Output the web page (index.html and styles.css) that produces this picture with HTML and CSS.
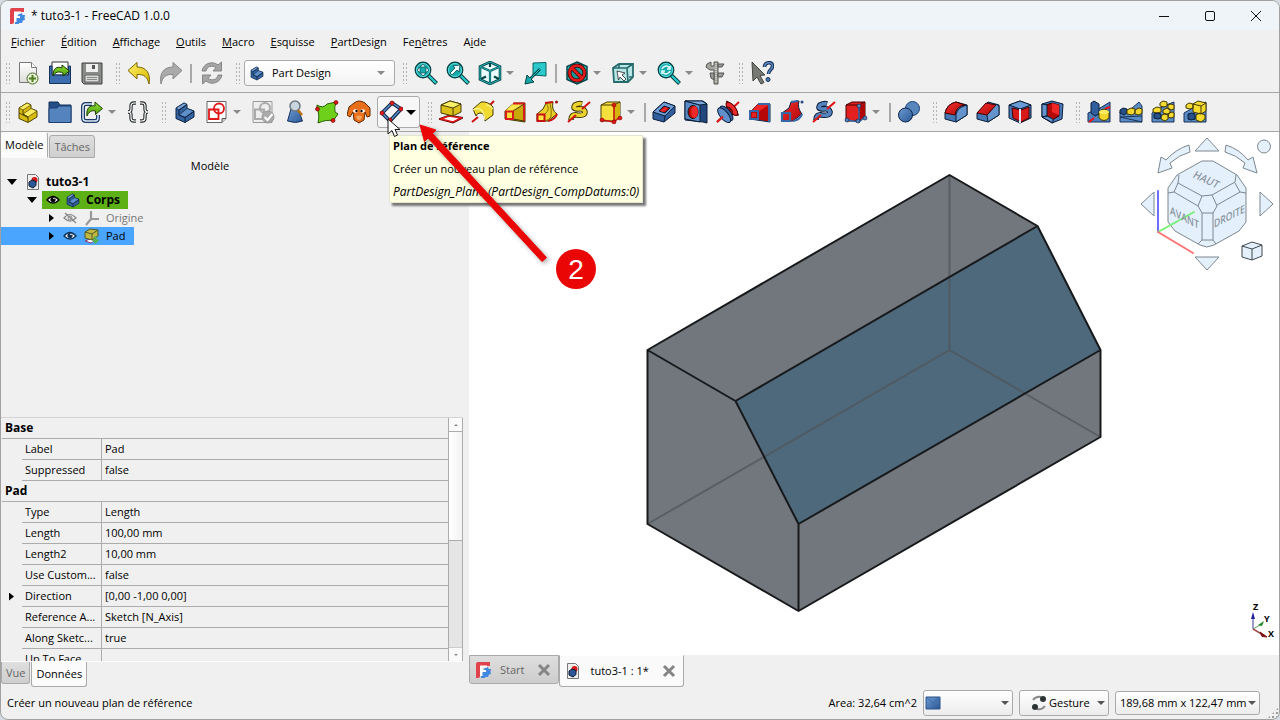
FILE: index.html
```html
<!DOCTYPE html>
<html lang="fr">
<head>
<meta charset="utf-8">
<title>* tuto3-1 - FreeCAD 1.0.0</title>
<link rel="stylesheet" href="styles.css">
</head>
<body>
<svg class="sprite" aria-hidden="true">
  <defs>
    <linearGradient id="gy" x1="0" y1="0" x2="1" y2="1"><stop offset="0" stop-color="#fdf06a"/><stop offset="1" stop-color="#d8b800"/></linearGradient>
    <linearGradient id="gb" x1="0" y1="0" x2="1" y2="1"><stop offset="0" stop-color="#6c9bd0"/><stop offset="1" stop-color="#2c5796"/></linearGradient>
    <linearGradient id="gr" x1="0" y1="0" x2="1" y2="1"><stop offset="0" stop-color="#f53030"/><stop offset="1" stop-color="#b00606"/></linearGradient>
    <linearGradient id="gg" x1="0" y1="0" x2="0" y2="1"><stop offset="0" stop-color="#8ee038"/><stop offset="1" stop-color="#4e9a06"/></linearGradient>
    <linearGradient id="gp" x1="0" y1="0" x2="0" y2="1"><stop offset="0" stop-color="#ffffff"/><stop offset="1" stop-color="#dcdcd8"/></linearGradient>
  </defs>
  <symbol id="logo" viewBox="0 0 16 16"><path d="M1 2q0-2 2-2h12v4H5v10q0 2-2 2H1z" fill="#e0434c"/><path d="M10 6l3-1 .5 2 2.500 0-.5 3 .5 2-2 .5-1 2.500-2.500 0-1 1H6V11z" fill="#4189e0"/><path d="M5 3.500h7v2H7.500v2.500H11v2H7.500V14H5z" fill="#fff"/></symbol>
  <symbol id="docfc" viewBox="0 0 16 16"><path d="M2.500.5h8l3 3v12h-11z" fill="#eee" stroke="#777"/><circle cx="9.500" cy="6" r="3" fill="#d81818"/><path d="M4 8l3-2 4 1.500v4L8 14l-4-2z" fill="#2d5797" stroke="#0c1c34"/></symbol>
  <symbol id="new" viewBox="0 0 24 24"><path d="M3.500 1.500h12l5 5v15h-17z" fill="url(#gp)" stroke="#777"/><path d="M15.500 1.500v5h5" fill="#fff" stroke="#777"/><circle cx="16.500" cy="17.500" r="5.500" fill="#e8f0d8" stroke="#456a25"/><path d="M16.500 14v7M13 17.500h7" stroke="#4e7d1c" stroke-width="2"/></symbol>
  <symbol id="open" viewBox="0 0 24 24"><path d="M4 1h16v13H4z" fill="#fff" stroke="#333"/><path d="M1.500 5v17.500h21V5h-2v9H4V5z" fill="#3c6cae" stroke="#14345e"/><path d="M5 15C5 7 9 5 14 7V4l7.500 6-6.500 5v-3c-4-2-8-1-10 3z" fill="url(#gg)" stroke="#173a02"/></symbol>
  <symbol id="save" viewBox="0 0 24 24"><path d="M2 2h20v21H4l-2-2z" fill="#8a8c8a" stroke="#3f413f"/><path d="M6 3h12v8H6z" fill="#eee"/><path d="M12 4h3v4h-3z" fill="#555"/><path d="M5 14h14v7H5z" fill="#d9dcd8" stroke="#666"/><path d="M7 16.500h10M7 18.500h10" stroke="#888"/></symbol>
  <symbol id="undo" viewBox="0 0 24 24"><path d="M1 9.500L10 1.500V6c9 0 14 6 12 17-1.500-7-5-10-12-9.500V18z" fill="url(#gy)" stroke="#7a6400"/></symbol>
  <symbol id="redo" viewBox="0 0 24 24"><path d="M23 9.500L14 1.500V6C5 6 0 12 2 23c1.500-7 5-10 12-9.500V18z" fill="#aaa" stroke="#888"/></symbol>
  <symbol id="refresh" viewBox="0 0 24 24"><path d="M2 10C3 3 12-1 18 4l3.500-3v9H13l3-3.500C12 4 7 5 6 10zM22 14c-1 7-10 11-16 6l-3.500 3v-9H11l-3 3.500c4 2.500 9 1.500 10-3.500z" fill="#a5a5a5" stroke="#858585"/></symbol>
  <symbol id="part" viewBox="0 0 24 24"><path d="M3 8l8-5 3 1.500v4l7 2.500v6l-9 5.500-9-4z" fill="#34639f" stroke="#0d2340"/><path d="M3 8l8-5 3 1.500L6 10z" fill="#7aa5d8" stroke="#0d2340" stroke-width=".7"/><path d="M6 15l8-6.500L21 11l-9 6.500z" fill="#5f90cb" stroke="#0d2340" stroke-width=".7"/><path d="M6 10v5l6 2.500v5M6 10l8-5.500M12 17.500l9-6" fill="none" stroke="#0d2340"/></symbol>
  <symbol id="party" viewBox="0 0 24 24"><path d="M3 8l8-5 4 2v3.500l6 2.500v6l-9 5.500-9-4z" fill="#d9bb10" stroke="#4e4300"/><path d="M3 8l8-5 4 2L7 10z" fill="#fcec62" stroke="#4e4300" stroke-width=".7"/><path d="M7 14l8-5.500 6 2.500-9 6z" fill="#fcec62" stroke="#4e4300" stroke-width=".7"/><path d="M7 10v4l5 3v5M3 13l9 4.500" fill="none" stroke="#4e4300"/></symbol>
  <symbol id="zoomfit" viewBox="0 0 24 24"><path d="M14 14l8.500 8.500" stroke="#033" stroke-width="4"/><path d="M14 14l8 8" stroke="#25c9cb" stroke-width="2.400"/><circle cx="9" cy="9" r="7.700" fill="#18abad" stroke="#064446" stroke-width="1.400"/><circle cx="9" cy="9" r="6.500" fill="none" stroke="#5fe2e2"/><path d="M9 3l2.500 3h-5zM9 15l2.500-3h-5zM3 9l3-2.500v5zM15 9l-3-2.500v5z" fill="#eff" stroke="#033" stroke-width=".6"/></symbol>
  <symbol id="zoomsel" viewBox="0 0 24 24"><path d="M14 14l8.500 8.500" stroke="#033" stroke-width="4"/><path d="M14 14l8 8" stroke="#25c9cb" stroke-width="2.400"/><circle cx="9" cy="9" r="7.700" fill="#18abad" stroke="#064446" stroke-width="1.400"/><circle cx="9" cy="9" r="6.500" fill="none" stroke="#5fe2e2"/><path d="M4 12l5-5-2-2 7-1-1 7-2-2-5 5z" fill="#eff" stroke="#033" stroke-width=".7"/></symbol>
  <symbol id="zoomref" viewBox="0 0 24 24"><path d="M14 14l8.500 8.500" stroke="#033" stroke-width="4"/><path d="M14 14l8 8" stroke="#25c9cb" stroke-width="2.400"/><circle cx="9" cy="9" r="7.700" fill="#18abad" stroke="#064446" stroke-width="1.400"/><circle cx="9" cy="9" r="6.500" fill="none" stroke="#5fe2e2"/><path d="M5 8c1-3 5-4 7-1.500M13 5v3h-3M13 10c-1 3-5 4-7 1.500M5 13v-3h3" fill="none" stroke="#eff" stroke-width="1.500"/></symbol>
  <symbol id="iso" viewBox="0 0 24 24"><path d="M12 1l10 4.500v13L12 23 2 18.500v-13z" fill="#e9ffff" stroke="#054447" stroke-width="2.600"/><path d="M2 5.500L12 10l10-4.500M12 10v13M2 18.500l6-3M22 18.500l-6-3M12 1v5" fill="none" stroke="#054447" stroke-width="2.200"/><path d="M12 1l10 4.500v13L12 23 2 18.500v-13zM2 5.500L12 10l10-4.500M12 10v13" fill="none" stroke="#28b7b9"/></symbol>
  <symbol id="align" viewBox="0 0 24 24"><path d="M9 2l13-.5V15L9 14z" fill="#2cc9cc" stroke="#086265"/><path d="M16 8L6 18" stroke="#044" stroke-width="2.600"/><path d="M1 23l2-9 7 7z" fill="#18a5a7" stroke="#044"/><path d="M16 8L5 19" stroke="#2cc9cc"/></symbol>
  <symbol id="nostop" viewBox="0 0 24 24"><path d="M12 1l10 4.500v13L12 23 2 18.500v-13z" fill="#20bfc2" stroke="#044447" stroke-width="1.500"/><circle cx="12" cy="12" r="7.500" fill="#1a9799" stroke="#400" stroke-width="4"/><path d="M7 7l10 10" stroke="#400" stroke-width="4"/><circle cx="12" cy="12" r="7.500" fill="none" stroke="#e01b1b" stroke-width="2.500"/><path d="M7 7l10 10" stroke="#e01b1b" stroke-width="2.600"/></symbol>
  <symbol id="boxsel" viewBox="0 0 24 24"><path d="M2 7l6-4h14v13l-5 5H3z" fill="#b8e5e6" stroke="#276b6d" stroke-width="1.800"/><path d="M2 7h14l6-4M16 7l1 14M8 3v4M22 16h-4" fill="none" stroke="#276b6d" stroke-width="1.600"/><path d="M6 10l8 2-3 2 4 4-2 2-4-4-1.500 3z" fill="#fff" stroke="#222" stroke-width=".8"/></symbol>
  <symbol id="caliper" viewBox="0 0 24 24"><path d="M4 3l4-2v4h3V1h4v22h-4V9H7L3 6z" fill="#a5a6a0" stroke="#555650"/><path d="M15 3h6l-2 3h-4zM15 12h6l-2 4h-4zM7 12h4v7l-3-2z" fill="#9a9b95" stroke="#555"/><path d="M13 2v20" stroke="#e8e8e4" stroke-dasharray="1 1"/></symbol>
  <symbol id="help" viewBox="0 0 24 24"><path d="M2 1l13 13-5 .5 4 7-3 1.500-4-7-4 4z" fill="#777a74" stroke="#41433e"/><path d="M14.500 6c0-5 8-6 8-1 0 4-4 3.500-4 8" fill="none" stroke="#152e57" stroke-width="3.600"/><path d="M14.500 6c0-5 8-6 8-1 0 4-4 3.500-4 8" fill="none" stroke="#5c88be" stroke-width="1.500"/><circle cx="18" cy="18.500" r="2" fill="#4a78b4" stroke="#152e57"/></symbol>
  <symbol id="folder" viewBox="0 0 24 24"><path d="M1 2h9l2 3h11v17.500H1z" fill="#244c85" stroke="#122f58"/><path d="M1 8h8l2-2h12v16.500H1z" fill="#5583bd" stroke="#1c4175"/></symbol>
  <symbol id="link" viewBox="0 0 24 24"><path d="M12 4H6q-3 0-3 3v11q0 3 3 3h9q3 0 3-3v-3" fill="none" stroke="#1b3a66" stroke-width="4"/><path d="M12 4H6q-3 0-3 3v11q0 3 3 3h9q3 0 3-3v-3" fill="none" stroke="#dce9f8" stroke-width="1.500"/><path d="M7 16C6 8 10 5 15 6V2l7.500 6.500-7 6V11c-4-1-7 1-8.500 5z" fill="url(#gg)" stroke="#1d4307"/></symbol>
  <symbol id="braces" viewBox="0 0 24 24"><path d="M10 3H8Q5 3 5 6v3q0 3-3 3 3 0 3 3v3q0 3 3 3h2M14 3h2q3 0 3 3v3q0 3 3 3-3 0-3 3v3q0 3-3 3h-2" fill="none" stroke="#2e3436" stroke-width="3.400"/><path d="M10 3H8Q5 3 5 6v3q0 3-3 3 3 0 3 3v3q0 3 3 3h2M14 3h2q3 0 3 3v3q0 3 3 3-3 0-3 3v3q0 3-3 3h-2" fill="none" stroke="#fff" stroke-width="1.100"/></symbol>
  <symbol id="sketch" viewBox="0 0 24 24"><path d="M2 1.500h19v17l-4 4H2z" fill="#fff" stroke="#666"/><path d="M21 18.500h-4v4" fill="#ccc" stroke="#555"/><circle cx="14" cy="8.500" r="5" fill="none" stroke="#e01818" stroke-width="1.800"/><path d="M4 9.500h9.500V19H4z" fill="none" stroke="#e01818" stroke-width="1.800"/></symbol>
  <symbol id="valid" viewBox="0 0 24 24"><path d="M2 1.500h19v21H2z" fill="#eee" stroke="#999"/><circle cx="14" cy="8" r="5" fill="none" stroke="#aaa" stroke-width="2"/><path d="M4 9.500h9V19H4z" fill="none" stroke="#aaa" stroke-width="2"/><circle cx="17" cy="17" r="6" fill="#aaa" stroke="#999"/><path d="M13.500 17l3 3 5-6" fill="none" stroke="#fff" stroke-width="2"/></symbol>
  <symbol id="pawn" viewBox="0 0 24 24"><path d="M8 9h7l4.500 12q-7 3-15 0z" fill="url(#gb)" stroke="#17345f"/><circle cx="12" cy="6" r="5" fill="#c9d6df" stroke="#6d7780" stroke-width="1.500"/><path d="M15 10l4 5" stroke="#b77415" stroke-width="2.600"/></symbol>
  <symbol id="greenp" viewBox="0 0 24 24"><path d="M2 5q6 4 10-1l9-2q-2 6-1 10l3 2-5 7q-6-2-15 2 2-9-1-14z" fill="#6fd01c" stroke="#276100"/><g fill="#e01414" stroke="#600" stroke-width=".6"><circle cx="2.500" cy="9" r="2"/><circle cx="21" cy="2.500" r="2"/><circle cx="18" cy="20.500" r="2"/></g></symbol>
  <symbol id="goat" viewBox="0 0 24 24"><path d="M7 3q5-4 11 0l5 5v8l-3 1-2-5-1 8-5 3-5-3-1-8-3 5-3-2 2-8z" fill="#e8701a" stroke="#602800"/><ellipse cx="8.500" cy="11" rx="2.500" ry="1.700" fill="#fff"/><ellipse cx="15.500" cy="11" rx="2.500" ry="1.700" fill="#fff"/><circle cx="9.500" cy="11" r="1.200"/><circle cx="14.500" cy="11" r="1.200"/><path d="M9 16q3-1 6 0l-1 3q-2 2-4 0z" fill="#f6a35c"/></symbol>
  <symbol id="datum" viewBox="0 0 24 24"><path d="M13 3L3 13l8 8L22 9z" fill="none" stroke="#102848" stroke-width="3.800" stroke-linejoin="round"/><path d="M13 3L3 13l8 8L22 9z" fill="none" stroke="#5f90cb" stroke-width="1.500"/><g fill="#ed1c1c" stroke="#700" stroke-width=".6"><circle cx="13" cy="3" r="2"/><circle cx="3" cy="13" r="2"/><circle cx="11" cy="20" r="2"/><circle cx="22" cy="9" r="2"/></g></symbol>
  <symbol id="pad" viewBox="0 0 24 24"><path d="M2 19l8-3 12 2-8 4z" fill="#fff" stroke="#500" stroke-width="2.600"/><path d="M2 19l8-3 12 2-8 4z" fill="#fff" stroke="#e01818" stroke-width="1.400"/><path d="M2 5l9-4 11 3v8l-8 4-12-3z" fill="#dcc01a" stroke="#453b00"/><path d="M2 5l9-4 11 3-8 4z" fill="#fdf06a" stroke="#453b00"/><path d="M14 8v8" stroke="#453b00"/></symbol>
  <symbol id="revol" viewBox="0 0 24 24"><path d="M1 22l6-5M17 7l6-6" stroke="#d01212" stroke-width="2"/><path d="M2 9L10 2q7-1 12 5v8l-8 6q0-8-5-8-3 0-4 3z" fill="#f0d930" stroke="#453b00"/><path d="M14 20q-1-9-5-11-4-1-7 1M22 9q-3-4-7-4" fill="none" stroke="#fff7a0" stroke-width="1.200"/></symbol>
  <symbol id="loft" viewBox="0 0 24 24"><path d="M2 11l9-8h11v19L2 19z" fill="#c7aa0a" stroke="#453b00"/><path d="M2 11l9-8h11l-12 8z" fill="#f9e64c"/><path d="M10 3.500h11V21" fill="none" stroke="#d71b1b" stroke-width="2"/><path d="M10 11l11-7M10 19l11 2" stroke="#453b00"/><path d="M3 11.500h7V19H3z" fill="#f7e03a" stroke="#d71b1b" stroke-width="2"/></symbol>
  <symbol id="pipe" viewBox="0 0 24 24"><path d="M2 14l6-5 3-6 7-1q-2 8 4 12l-9 7H2z" fill="#e9d02a" stroke="#443a00"/><path d="M10 14q6-5 1-11M10 21q4-1 6-4 1-6-1-14" fill="none" stroke="#887300"/><path d="M10 3l8-1M13 21q7-1 9-7" fill="none" stroke="#c81212" stroke-width="2"/><path d="M2.500 14.500h7V21h-7z" fill="#fbe744" stroke="#c81212" stroke-width="2"/><circle cx="21.500" cy="2" r="1.500" fill="#a01010"/></symbol>
  <symbol id="helix" viewBox="0 0 24 24"><path d="M4 20Q4 14 10 15q8 1 8-3-1-4-7-3Q5 9 8 5q4-2 7-1" fill="none" stroke="#443a00" stroke-width="5.600"/><path d="M4 19.500Q4 14 10 15q8 1 8-3-1-4-7-3Q5 9 8 5q4-2 6.500-1" fill="none" stroke="#ecd42e" stroke-width="3.600"/><path d="M1 22l8-7M15 9l8-7" stroke="#d01212" stroke-width="2"/></symbol>
  <symbol id="primy" viewBox="0 0 24 24"><path d="M2 5l6-3h13v14l-6 5H2z" fill="#f6df3d" stroke="#453b00"/><path d="M15 6v15l6-4V3z" fill="#d3b50b"/><path d="M2 5h13l6-3" fill="none" stroke="#453b00"/><path d="M15 5v16M3 20l12 2 6-5" stroke="#c91313" fill="none" stroke-width="1.600"/><g fill="#df1616" stroke="#700" stroke-width=".5"><circle cx="3" cy="20" r="2"/><circle cx="15" cy="5" r="2"/><circle cx="15" cy="22" r="2"/><circle cx="21" cy="18" r="2"/></g></symbol>
  <symbol id="pocket" viewBox="0 0 24 24"><path d="M1 12L12 2l11 4v7L12 22 1 19z" fill="#315e9c" stroke="#0a1d38"/><path d="M1 12L12 2l11 4-10 10z" fill="#719fd5" stroke="#0a1d38"/><path d="M7 11l5-5 6 2-5 5z" fill="#a60505" stroke="#0a1d38"/><path d="M8 11l5-4 3 1-4 4z" fill="#ee2828"/><path d="M13 16l-1 6" stroke="#0a1d38"/></symbol>
  <symbol id="hole" viewBox="0 0 24 24"><path d="M1 1h18l4 3v19l-4-1-18-2z" fill="#22477d" stroke="#0a1d38"/><path d="M1 1l15 4v17L1 19z" fill="#5a8cc8" stroke="#0a1d38"/><path d="M1 1h17l5 3-7 1z" fill="#7eaade" stroke="#0a1d38"/><ellipse cx="9" cy="12" rx="5" ry="6.500" fill="#b70707" stroke="#111"/><ellipse cx="10.500" cy="12" rx="3.500" ry="6" fill="#ef2929"/></symbol>
  <symbol id="groove" viewBox="0 0 24 24"><path d="M1 22l22-20" stroke="#d11" stroke-width="2"/><g transform="rotate(-40 12 12)"><path d="M18 3q4 9 0 18-4-2-4-9t4-9z" fill="#d81818" stroke="#500"/><ellipse cx="17" cy="12" rx="3.500" ry="8" fill="#ee2a2a" stroke="#500"/><ellipse cx="13" cy="12" rx="3" ry="5" fill="#b00808" stroke="#400"/><ellipse cx="10" cy="12" rx="4" ry="9" fill="#34639f" stroke="#0a1d38"/><ellipse cx="7" cy="12" rx="4" ry="9" fill="#5f90cb" stroke="#0a1d38"/></g><path d="M1 22l6-5.500" stroke="#e11818" stroke-width="2"/></symbol>
  <symbol id="subloft" viewBox="0 0 24 24"><path d="M2 12l8-8h12v18L2 19z" fill="#b80707" stroke="#0d284b"/><path d="M2 12l8-8h12l-12 8z" fill="#ee2525"/><path d="M2 11h8v8H2zM10 4h11v18" fill="none" stroke="#3667a7" stroke-width="2"/><path d="M4 13h4v4H4z" fill="#e32222"/></symbol>
  <symbol id="subpipe" viewBox="0 0 24 24"><path d="M2 13l7-5 2-6 8-1q-2 7 3 13l-9 7H2z" fill="url(#gr)" stroke="#0d284b"/><path d="M2 13h8v8H2zM11 2l7-1M13 21q7-1 9-7" fill="none" stroke="#3667a7" stroke-width="2.200"/><circle cx="22" cy="2" r="1.500" fill="#244b83"/></symbol>
  <symbol id="subhelix" viewBox="0 0 24 24"><path d="M4 20Q4 14 10 15q8 1 8-3-1-4-7-3Q5 9 8 5q4-2 7-1" fill="none" stroke="#0a1d38" stroke-width="5.600"/><path d="M4 19.500Q4 14 10 15q8 1 8-3-1-4-7-3Q5 9 8 5q4-2 6.500-1" fill="none" stroke="#5585c0" stroke-width="3.600"/><path d="M1 22l8-7M15 9l8-7" stroke="#e11818" stroke-width="2.200"/></symbol>
  <symbol id="primr" viewBox="0 0 24 24"><path d="M2 5l6-3h13v14l-6 5H2z" fill="#e22020" stroke="#400"/><path d="M15 6v15l6-4V3z" fill="#b20707"/><path d="M2 5h13l6-3M15 5v16" fill="none" stroke="#400"/><path d="M15 5v16M3 20l12 2 6-5" stroke="#3767a6" fill="none" stroke-width="1.600"/><g fill="#5284c0" stroke="#0a1d38" stroke-width=".6"><circle cx="3" cy="20" r="2"/><circle cx="15" cy="6" r="2"/><circle cx="14" cy="21" r="2"/><circle cx="21" cy="18" r="2"/></g></symbol>
  <symbol id="bool" viewBox="0 0 24 24"><circle cx="15.500" cy="8.500" r="7" fill="#5887be" stroke="#1c3f71"/><circle cx="8.500" cy="15" r="7" fill="url(#gb)" stroke="#0a2349"/></symbol>
  <symbol id="fillet" viewBox="0 0 24 24"><path d="M1 13Q3 4 12 2l11 3v10L12 22 1 19z" fill="#4777b5" stroke="#0a1d38"/><path d="M12 22v-8q2-7 11-9v10z" fill="#6594cd" stroke="#0a1d38"/><path d="M1 13Q3 4 12 2l9 3q-9 1-10 10z" fill="url(#gr)" stroke="#400"/></symbol>
  <symbol id="chamfer" viewBox="0 0 24 24"><path d="M1 13L12 2l11 3v10L12 22 1 19z" fill="#4777b5" stroke="#0a1d38"/><path d="M11 15l9-11 3 2v9l-11 7z" fill="#6594cd" stroke="#0a1d38"/><path d="M1 13L10 3l10 2-9 10z" fill="url(#gr)" stroke="#400"/></symbol>
  <symbol id="draft" viewBox="0 0 24 24"><path d="M1 5l11-4 11 4v13l-11 5-11-5z" fill="#4777b5" stroke="#0a1d38"/><path d="M4 8l9 2 8-3v11l-8 4-8-4z" fill="#d91818" stroke="#400"/><path d="M1 5l11-4 11 4-11 4z" fill="#6c9cd5" stroke="#0a1d38"/><path d="M12 9v14" stroke="#dbe7f5" stroke-width="2"/></symbol>
  <symbol id="thick" viewBox="0 0 24 24"><path d="M2 4l10-3 11 3-1 15-10 4-10-6z" fill="#4777b5" stroke="#0a1d38"/><path d="M6 5l6-2 7 2v11l-7 4-6-4z" fill="#b50a0a" stroke="#300"/><path d="M12 3l7 2v10l-7-3z" fill="#ef2727"/><path d="M2 4l5 1v11l-5 1zM7 16l6 3v4L2 17z" fill="#6594cd" stroke="#0a1d38"/></symbol>
  <symbol id="mirror" viewBox="0 0 24 24"><path d="M1 13L13 8l10-6v20H1z" fill="#4d7dbb" stroke="#183258"/><path d="M4 3l3-2 5 3v10l-4 2-4-3z" fill="#315e9c" stroke="#0a1d38"/><path d="M2 22l5-4M18 9l5-2" stroke="#e11" stroke-width="2"/><path d="M12 12q5-6 10 0v6q-5 5-10 0z" fill="#f2d62b" stroke="#443a00"/><ellipse cx="17" cy="12" rx="5" ry="2" fill="#fbec62"/></symbol>
  <symbol id="linpat" viewBox="0 0 24 24"><path d="M1 12L12 9l8-7 3 4v16H1z" fill="#5b8bc5" stroke="#183258"/><path d="M1 17l22-1M1 17l22 5" stroke="#183258"/><path d="M1 10l3-2 4 1v4l-3 2-4-2z" fill="#274f88" stroke="#071c39"/><path d="M8 10l4-2 4 1v4l-3 2-5-1zM16 10l4-2 3 1v4l-3 2-4-1z" fill="#f3d62b" stroke="#443a00"/></symbol>
  <symbol id="polpat" viewBox="0 0 24 24"><path d="M1 13L15 5l8-3v20H1z" fill="#5b8bc5" stroke="#183258"/><g fill="#f5da30" stroke="#443a00"><path d="M9 3l3-2 4 1v4l-3 1-4-1zM2 9l4-2 4 1v4l-4 1-4-1zM17 5l3-1 3 1v4l-3 1-3-1zM12 10l4-2 3 1v4l-3 1-4-1zM18 13l3-1 2 1v4l-3 1-3-1zM10 16l3-2 4 1v4l-3 2-4-2z"/></g><path d="M3 14l3-1 4 1v4l-3 1-4-1z" fill="#274f88" stroke="#071c39"/></symbol>
  <symbol id="multi" viewBox="0 0 24 24"><path d="M1 13L15 5l8-3v20H1z" fill="#5b8bc5" stroke="#183258"/><g fill="#f5da30" stroke="#443a00"><path d="M10 4l5-3 8 2v8l-5 3-8-2zM3 5l3-2 4 1v4l-3 1-4-1zM13 15l4-2 5 2v4l-4 3-5-2z"/></g><path d="M10 4l8 2 5-3M18 6v8" fill="none" stroke="#443a00"/><path d="M5 14l4-1 3 1v5l-4 1-3-1z" fill="#274f88" stroke="#071c39"/></symbol>
  <symbol id="eye" viewBox="0 0 14 12"><path d="M1 6q6-7 12 0-6 6-12 0z" fill="#fff" stroke="currentColor" stroke-width="1.400"/><circle cx="7" cy="5.500" r="2.600" fill="currentColor"/><circle cx="8" cy="4.500" r=".8" fill="#fff"/></symbol>
</svg>

<div class="window">
  <header class="titlebar">
    <svg class="i16"><use href="#logo"/></svg>
    <h1 class="title">* tuto3-1 - FreeCAD 1.0.0</h1>
    <div class="winctl">
      <button class="wbtn" aria-label="Réduire"><svg viewBox="0 0 12 12"><path d="M1 6.500h10"/></svg></button>
      <button class="wbtn" aria-label="Agrandir"><svg viewBox="0 0 12 12"><rect x="1.500" y="1.500" width="9" height="9" rx="1.500"/></svg></button>
      <button class="wbtn" aria-label="Fermer"><svg viewBox="0 0 12 12"><path d="M1 1l10 10M11 1L1 11"/></svg></button>
    </div>
  </header>
  <nav class="menubar">
    <button><u>F</u>ichier</button><button><u>É</u>dition</button><button><u>A</u>ffichage</button><button><u>O</u>utils</button><button><u>M</u>acro</button><button><u>E</u>squisse</button><button><u>P</u>artDesign</button><button>Fe<u>n</u>êtres</button><button>A<u>i</u>de</button>
  </nav>

  <div class="toolbar standard" role="toolbar" aria-label="Standard">
    <i class="grip first"></i>
    <button class="tool" aria-label="Nouveau"><svg><use href="#new"/></svg></button>
    <button class="tool" aria-label="Ouvrir"><svg><use href="#open"/></svg></button>
    <button class="tool" aria-label="Enregistrer"><svg><use href="#save"/></svg></button>
    <i class="grip"></i>
    <button class="tool" aria-label="Annuler"><svg><use href="#undo"/></svg></button>
    <button class="tool" aria-label="Rétablir"><svg><use href="#redo"/></svg></button>
    <i class="sep"></i>
    <button class="tool" aria-label="Rafraîchir"><svg><use href="#refresh"/></svg></button>
    <i class="grip"></i>
    <div class="combo workbench">
      <svg class="i16"><use href="#part"/></svg>
      <select aria-label="Atelier"><option>Part Design</option></select>
      <i class="caret"></i>
    </div>
    <i class="grip"></i>
    <button class="tool" aria-label="Tout afficher"><svg><use href="#zoomfit"/></svg></button>
    <button class="tool" aria-label="Afficher la sélection"><svg><use href="#zoomsel"/></svg></button>
    <button class="tool drop" aria-label="Vue isométrique"><svg><use href="#iso"/></svg><i class="caret"></i></button>
    <button class="tool" aria-label="Aligner"><svg><use href="#align"/></svg></button>
    <i class="sep"></i>
    <button class="tool drop" aria-label="Style de tracé"><svg><use href="#nostop"/></svg><i class="caret"></i></button>
    <button class="tool drop" aria-label="Sélection"><svg><use href="#boxsel"/></svg><i class="caret"></i></button>
    <button class="tool drop" aria-label="Zoom"><svg><use href="#zoomref"/></svg><i class="caret"></i></button>
    <button class="tool" aria-label="Mesurer"><svg><use href="#caliper"/></svg></button>
    <i class="grip"></i>
    <button class="tool" aria-label="Qu'est-ce que c'est ?"><svg><use href="#help"/></svg></button>
  </div>

  <div class="toolbar" role="toolbar" aria-label="Part Design">
    <i class="grip first"></i>
    <button class="tool" aria-label="Pièce"><svg><use href="#party"/></svg></button>
    <button class="tool" aria-label="Groupe"><svg><use href="#folder"/></svg></button>
    <button class="tool drop" aria-label="Lien"><svg><use href="#link"/></svg><i class="caret"></i></button>
    <button class="tool" aria-label="Variables"><svg><use href="#braces"/></svg></button>
    <i class="grip"></i>
    <button class="tool" aria-label="Corps"><svg><use href="#part"/></svg></button>
    <button class="tool drop" aria-label="Esquisse"><svg><use href="#sketch"/></svg><i class="caret"></i></button>
    <button class="tool" aria-label="Valider l'esquisse"><svg><use href="#valid"/></svg></button>
    <button class="tool" aria-label="Vérifier"><svg><use href="#pawn"/></svg></button>
    <button class="tool" aria-label="Forme liée"><svg><use href="#greenp"/></svg></button>
    <button class="tool" aria-label="Clone"><svg><use href="#goat"/></svg></button>
    <button class="tool drop hover" aria-label="Plan de référence" aria-describedby="tip"><svg><use href="#datum"/></svg><i class="caret dark"></i></button>
    <i class="grip"></i>
    <button class="tool" aria-label="Protrusion"><svg><use href="#pad"/></svg></button>
    <button class="tool" aria-label="Révolution"><svg><use href="#revol"/></svg></button>
    <button class="tool" aria-label="Lissage"><svg><use href="#loft"/></svg></button>
    <button class="tool" aria-label="Balayage"><svg><use href="#pipe"/></svg></button>
    <button class="tool" aria-label="Hélice"><svg><use href="#helix"/></svg></button>
    <button class="tool drop" aria-label="Primitive additive"><svg><use href="#primy"/></svg><i class="caret"></i></button>
    <i class="sep"></i>
    <button class="tool" aria-label="Cavité"><svg><use href="#pocket"/></svg></button>
    <button class="tool" aria-label="Perçage"><svg><use href="#hole"/></svg></button>
    <button class="tool" aria-label="Rainure"><svg><use href="#groove"/></svg></button>
    <button class="tool" aria-label="Lissage soustractif"><svg><use href="#subloft"/></svg></button>
    <button class="tool" aria-label="Balayage soustractif"><svg><use href="#subpipe"/></svg></button>
    <button class="tool" aria-label="Hélice soustractive"><svg><use href="#subhelix"/></svg></button>
    <button class="tool drop" aria-label="Primitive soustractive"><svg><use href="#primr"/></svg><i class="caret"></i></button>
    <i class="sep"></i>
    <button class="tool" aria-label="Opération booléenne"><svg><use href="#bool"/></svg></button>
    <i class="grip"></i>
    <button class="tool" aria-label="Congé"><svg><use href="#fillet"/></svg></button>
    <button class="tool" aria-label="Chanfrein"><svg><use href="#chamfer"/></svg></button>
    <button class="tool" aria-label="Dépouille"><svg><use href="#draft"/></svg></button>
    <button class="tool" aria-label="Épaisseur"><svg><use href="#thick"/></svg></button>
    <i class="grip"></i>
    <button class="tool" aria-label="Symétrie"><svg><use href="#mirror"/></svg></button>
    <button class="tool" aria-label="Répétition linéaire"><svg><use href="#linpat"/></svg></button>
    <button class="tool" aria-label="Répétition circulaire"><svg><use href="#polpat"/></svg></button>
    <button class="tool" aria-label="Transformation multiple"><svg><use href="#multi"/></svg></button>
  </div>

  <div class="main">
    <aside class="dock">
      <div class="tabs top" role="tablist">
        <button class="tab active" role="tab">Modèle</button><button class="tab" role="tab">Tâches</button>
      </div>
      <div class="tree">
        <div class="treehead">Modèle</div>
        <div class="node l0"><i class="exp open"></i><svg class="i16"><use href="#docfc"/></svg><b class="name">tuto3-1</b></div>
        <div class="node l1"><i class="exp open"></i><span class="hl green"><svg class="eye"><use href="#eye"/></svg><svg class="i16"><use href="#part"/></svg><b class="name">Corps</b></span></div>
        <div class="node l2 muted"><i class="exp"></i><svg class="eye" viewBox="0 0 14 12"><path d="M1 6q6-7 12 0-6 6-12 0zM2 1l11 10" fill="none" stroke="#888" stroke-width="1.200"/><circle cx="7" cy="6" r="2" fill="none" stroke="#888"/></svg><svg class="i16" viewBox="0 0 16 16"><path d="M7 1v8h8M7 9l-5 6" fill="none" stroke="#999" stroke-width="2.200"/></svg><span class="name">Origine</span></div>
        <div class="node l2 selected"><i class="exp"></i><svg class="eye navy"><use href="#eye"/></svg><svg class="i16" viewBox="0 0 16 16"><path d="M1 13l5-2 6 1-5 3z" fill="#fff" stroke="#8c4070"/><path d="M1 4l5-3 8 1v6l-6 4-7-2z" fill="#bfb944" stroke="#4e5824"/><path d="M1 4l7 2 6-4M8 6v5" fill="none" stroke="#4e5824"/><path d="M11.500 8v6M9 11.500l2.500 3 3-3" stroke="#54b354" stroke-width="2" fill="none"/></svg><span class="name">Pad</span></div>
      </div>
      <div class="props">
        <div class="propscroll">
          <table class="ptable">
            <colgroup><col class="c1"><col class="c2"><col></colgroup>
            <tbody>
              <tr class="grp"><th colspan="3">Base</th></tr>
              <tr><td></td><td>Label</td><td>Pad</td></tr>
              <tr><td></td><td>Suppressed</td><td>false</td></tr>
              <tr class="grp"><th colspan="3">Pad</th></tr>
              <tr><td></td><td>Type</td><td>Length</td></tr>
              <tr><td></td><td>Length</td><td>100,00 mm</td></tr>
              <tr><td></td><td>Length2</td><td>10,00 mm</td></tr>
              <tr><td></td><td>Use Custom...</td><td>false</td></tr>
              <tr><td><i class="exp"></i></td><td>Direction</td><td>[0,00 -1,00 0,00]</td></tr>
              <tr><td></td><td>Reference A...</td><td>Sketch [N_Axis]</td></tr>
              <tr><td></td><td>Along Sketc...</td><td>true</td></tr>
              <tr><td></td><td>Up To Face</td><td></td></tr>
            </tbody>
          </table>
        </div>
        <div class="scrollbar"><button class="sbtn" aria-label="Haut"><i class="up"></i></button><div class="thumb"></div><div class="track"></div><button class="sbtn" aria-label="Bas"><i class="down"></i></button></div>
      </div>
      <div class="tabs bottom" role="tablist">
        <button class="tab" role="tab">Vue</button><button class="tab active" role="tab">Données</button>
      </div>
    </aside>

    <main class="center">
      <div class="view">
        <svg class="model" viewBox="469 132 809 523" role="img" aria-label="Solide">
          <path d="M949 175l88 51 63 124v87L798 611 647 524V350z" fill="#72777e"/>
          <path d="M1037 226l63 124-302 174-63-123z" fill="#4e697c"/>
          <path d="M949 175v175L647 524M949 350l151 87" fill="none" stroke="#50565a" stroke-opacity=".75" stroke-width="2"/>
          <path d="M949 175l88 51 63 124v87L798 611 647 524V350zM647 350l88 51 302-175M735 401l63 123 302-174M798 524v87" fill="none" stroke="#17191b" stroke-width="2" stroke-linejoin="round"/>
        </svg>
        <svg class="navcube" viewBox="0 0 150 150" role="img" aria-label="Cube de navigation">
          <g fill="#e4f1fd" stroke="#7c878e" stroke-width="1">
            <path d="M77 8l12 13H65zM77 140l12-13H65zM11 74l13-12v24zM143 74l-13-12v24z"/>
            <circle cx="134" cy="16.500" r="6.500"/>
            <path d="M59 15l1 7q-11 3-20 11l2 5-14 5 3-16 5 3q10-11 23-15zM96 15l-1 7q11 3 20 11l-2 5 14 5-4-16-5 3q-9-11-22-15z"/>
            <path d="M72 31h11l24 14 9 13v34l-7 9-25 14-7 2-7-2-25-14-7-9V58l9-13z"/>
            <path fill="none" d="M49 45l-1 8 24 13 10-1 23-13 1-7M48 53l-4 9 24 14M44 62l-6 1M105 53l5 9 6 1M110 62L87 75M72 66l-4 10 4 7h11l4-7-5-11M72 83v27l-4 4M83 83v27l3 4M72 110h11"/>
          </g>
          <path d="M28 102V61" stroke="#6e6eff" stroke-width="2" stroke-linecap="round"/><path d="M28 102l36-20" stroke="#78f078" stroke-width="2" stroke-linecap="round"/><path d="M28 102l35 21" stroke="#ff7474" stroke-width="2" stroke-linecap="round"/>
          <g class="cubetext">
            <text transform="matrix(.9 .42 -.6 .9 62 47)">HAUT</text>
            <text transform="matrix(.88 .46 0 1.100 40 84)">AVANT</text>
            <text transform="matrix(.86 -.44 0 1.100 84 98)">DROITE</text>
          </g>
          <path d="M122 112l-10 4v11l10 3 10-4v-11zM112 116l10 3 10-4M122 119v11" fill="#e4f1fd" stroke="#3e474d"/>
        </svg>
        <svg class="axes" viewBox="0 0 30 40" role="img" aria-label="Axes">
          <path d="M4 28V14" stroke="#7c7cc0" stroke-width="1.500"/><path d="M2 18L4 11l2 7z" fill="#22229a"/>
          <path d="M4 28l9-5" stroke="#66a666"/><path d="M9 24l6-4-2 5z" fill="#1d8a1d"/>
          <path d="M4 28l12 7" stroke="#a45050" stroke-width="1.500"/><path d="M11 31l7 5-5-.5z" fill="#7e1515" stroke="#7e1515"/>
          <text x="4" y="9">Z</text><text x="15" y="21">Y</text><text x="19" y="36">X</text>
        </svg>
      </div>
      <div class="mditabs" role="tablist">
        <div class="mtab" role="tab"><svg class="i16"><use href="#logo"/></svg><span>Start</span><button class="close" aria-label="Fermer"><svg viewBox="0 0 14 14"><path d="M2 2l10 10M12 2L2 12"/></svg></button></div>
        <div class="mtab active" role="tab"><svg class="i16"><use href="#docfc"/></svg><span>tuto3-1 : 1*</span><button class="close" aria-label="Fermer"><svg viewBox="0 0 14 14"><path d="M2 2l10 10M12 2L2 12"/></svg></button></div>
      </div>
    </main>
  </div>

  <footer class="status">
    <span class="msg">Créer un nouveau plan de référence</span>
    <span class="area">Area: 32,64 cm^2</span>
    <button class="sb notif" aria-label="Notifications"><svg class="i16" viewBox="0 0 16 16"><path d="M1 2h14v12H1z" fill="url(#gb)" stroke="#2b528d"/><path d="M1 2l7 6 7-6" fill="none" stroke="#3768aa"/></svg><i class="caret mid"></i></button>
    <button class="sb gesture"><svg class="i16" viewBox="0 0 16 16"><path d="M2 5q3-4 8-3M14 11q-3 4-8 3" fill="none" stroke="#888" stroke-width="2"/><circle cx="12" cy="4" r="3" fill="#2e3436"/><circle cx="4" cy="12" r="3" fill="#2e3436"/></svg><span>Gesture</span><i class="caret mid"></i></button>
    <button class="sb dims"><span>189,68 mm x 122,47 mm</span><i class="caret mid"></i></button>
    <i class="sizegrip"></i>
  </footer>
</div>

<div class="tooltip" id="tip" role="tooltip">
  <p><b>Plan de référence</b></p>
  <p>Créer un nouveau plan de référence</p>
  <p><em>PartDesign_Plane (PartDesign_CompDatums:0)</em></p>
</div>
<svg class="callout" viewBox="0 0 140 150" aria-hidden="true"><path d="M5 5l16 5-3.500 3.500L131.500 137.500l-4.500 4L13 18l-3.500 3.500z" fill="#eb0606" stroke="#eb0606"/></svg>
<svg class="pointer" viewBox="0 0 14 20" aria-hidden="true"><path d="M1 1v15l4-3.500 2.500 6 3-1.500L8 11.500h5z" fill="#fff" stroke="#111"/></svg>
<span class="step">2</span>
</body>
</html>
```
FILE: styles.css
```css
* { box-sizing: border-box; }
body {
  margin: 0;
  background: #d5dbe3;
  color: #000;
  font: 11px/16px "Open Sans", "Noto Sans", sans-serif;
}
button, select { font: inherit; color: inherit; border: 0; padding: 0; background: none; }
svg { display: block; flex: none; }
.sprite { position: absolute; width: 0; height: 0; }
.i16 { width: 16px; height: 16px; }

.window {
  position: relative;
  display: flex;
  flex-direction: column;
  min-height: 100vh;
  border: 1px solid #a0a0a0;
  border-radius: 8px;
  background: #f0f0f0;
  overflow: hidden;
}

.titlebar { display: flex; align-items: center; height: 29px; padding-left: 8px; gap: 6px; background: #eff4f8; }
.title { margin: 0; font-size: 12px; font-weight: 400; }
.winctl { display: flex; margin-left: auto; }
.wbtn { width: 46px; height: 29px; display: grid; place-items: center; }
.wbtn svg { width: 12px; height: 12px; fill: none; stroke: #111; }

.menubar { display: flex; gap: 16px; height: 24px; padding-left: 10px; align-items: center; }
.menubar button { white-space: nowrap; }

.toolbar { display: flex; align-items: center; height: 39px; border-bottom: 1px solid #a6a6a6; }
.tool { display: flex; flex: none; align-items: center; justify-content: center; width: 32px; height: 32px; }
.tool svg { width: 24px; height: 24px; }
.drop { width: 46px; padding-left: 4px; gap: 4px; justify-content: flex-start; }
.hover { width: 43px; padding-left: 1px; gap: 3px; margin: 0 0 0 2px; border: 1px solid #aaa; border-radius: 3px; background: #f7f7f7; }
.grip {
  flex: none;
  width: 15px;
  height: 22px;
  padding: 0 2px 0 7px;
  background: radial-gradient(circle, #b4b4b4 0 1px, transparent 1px) 0 0 / 3px 4px content-box;
}
.first { width: 11px; padding: 0 1px 0 4px; }
.sep { flex: none; width: 2px; height: 19px; margin: 0 2px 0 3px; background: #a8a8a8; }
.standard .sep { margin: 0 4px 0 3px; }
.caret { flex: none; border: 4px solid transparent; border-top-color: #8a8a8a; border-bottom: 0; }
.caret.dark { border-width: 5px 5px 0; border-top-color: #000; }
.caret.mid { border-top-color: #555; }
.combo {
  display: flex;
  align-items: center;
  width: 151px;
  height: 26px;
  margin-left: 1px;
  padding: 0 9px 0 4px;
  border: 1px solid #aaa;
  border-radius: 3px;
  background: linear-gradient(#fff, #f3f3f3);
}
.combo select { flex: 1; appearance: none; padding-left: 7px; }

.main { display: flex; flex: 1; min-height: 0; }
.dock { display: flex; flex-direction: column; width: 468px; padding-right: 6px; }
.tabs { display: flex; gap: 1px; }
.tab { border: 1px solid #aaa; padding: 0 4px; background: linear-gradient(#dedede, #cfcfcf); color: #666; }
.tab.active { background: #fbfbfb; color: #000; }
.top { align-items: flex-end; height: 26px; }
.top .tab { height: 23px; border-radius: 3px 3px 0 0; }
.top .active { height: 26px; border-bottom-color: #fbfbfb; border-left: 0; border-top-color: #fbfbfb; }
.bottom { height: 25px; align-items: flex-start; }
.bottom .tab { height: 22px; border-radius: 0 0 3px 3px; border-top: 0; }
.bottom .active { height: 25px; }
.tree { flex: 1; min-height: 120px; }
.treehead { padding: 0 44px 0 0; text-align: center; height: 15px; line-height: 15px; }
.node { display: flex; align-items: center; height: 18px; gap: 5px; }
.l0 { padding-left: 5px; }
.l1 { padding-left: 25px; }
.l2 { padding-left: 45px; }
.l2 .i16 { margin: 0 1px 0 2px; }
.name { white-space: nowrap; }
b.name { font-size: 12px; }
.l0 .i16 { margin-left: 2px; }
.muted { color: #777; }
.selected { width: 133px; background: #4aa5ff; }
.hl { display: flex; align-items: center; gap: 5px; height: 18px; padding: 0 8px 0 4px; margin-left: -1px; }
.green { background: #5db116; }
.eye { width: 14px; height: 12px; color: #000; }
.navy { color: #0c3158; }
.exp { display: block; flex: none; width: 5px; height: 8px; margin: 0 4px 0 3px; background: #000; clip-path: polygon(0 0, 100% 50%, 0 100%); }
.exp.open { width: 10px; height: 6px; margin: 0 1px; clip-path: polygon(0 0, 100% 0, 50% 100%); }

.props { display: flex; height: 245px; border-top: 1px solid #d4d4d4; border-bottom: 1px solid #fff; }
.propscroll { flex: 1; overflow: hidden; padding-left: 1px; }
.ptable { width: 100%; border-collapse: separate; border-spacing: 0; table-layout: fixed; }
.c1 { width: 20px; }
.c2 { width: 80px; }
.ptable th, .ptable td { height: 21px; padding: 0 3px; line-height: 16px; text-align: left; white-space: nowrap; overflow: hidden; border-bottom: 1px solid #acacac; }
.ptable th { font-size: 12px; }
.ptable td:first-child { border: 0; padding: 0; }
.ptable .exp { margin-left: 7px; }
.ptable td:nth-child(2) { border-right: 1px solid #acacac; }
.scrollbar { display: flex; flex-direction: column; width: 15px; border: 1px solid #acacac; border-top: 0; border-bottom: 0; background: #e5e5e5; }
.sbtn { height: 14px; display: grid; place-items: center; background: #fafafa; border-bottom: 1px solid #acacac; }
.sbtn:last-child { border-bottom: 0; border-top: 1px solid #ccc; }
.thumb { height: 109px; background: linear-gradient(90deg, #fff, #f2f2f2); border-bottom: 1px solid #acacac; }
.track { flex: 1; }
.up, .down { border: 2px solid transparent; border-bottom-color: #888; border-top: 0; }
.down { border-top: 2px solid #888; border-bottom: 0; }

.center { display: flex; flex: 1; flex-direction: column; min-width: 0; }
.view { position: relative; flex: 1; background: #fff; min-height: 300px; }
.model { position: absolute; width: 100%; height: 100%; }
.navcube { position: absolute; top: -2px; right: -1px; width: 150px; height: 150px; }
.cubetext { fill: #8b959d; font: 600 10px "Open Sans", sans-serif; }
.axes { position: absolute; right: 0; bottom: 14px; width: 30px; height: 40px; overflow: visible; font: 700 9px "Open Sans", sans-serif; }
.mditabs { display: flex; align-items: flex-start; height: 32px; }
.mtab { display: flex; align-items: center; height: 29px; padding: 0 7px 0 5px; border: 1px solid #aaa; border-radius: 0 0 3px 3px; background: linear-gradient(#dedede, #cdcdcd); color: #666; }
.mtab span { padding: 0 13px 0 9px; white-space: nowrap; }
.mtab.active { height: 32px; border-top-color: #fff; background: #fafafa; color: #000; }
.close svg { width: 14px; height: 14px; stroke: #858585; stroke-width: 3; }

.status { display: flex; align-items: center; height: 32px; padding: 0 19px 0 6px; gap: 6px; }
.msg { flex: 1; }
.area { white-space: nowrap; }
.sb { display: flex; align-items: center; height: 26px; padding: 0 3px 0 1px; border: 1px solid #aaa; border-radius: 3px; background: linear-gradient(#fff, #ececec); white-space: nowrap; }
.sb .caret { margin-left: auto; }
.notif { width: 90px; }
.gesture { width: 90px; padding-left: 11px; gap: 2px; }
.dims { width: 145px; padding-left: 4px; height: 24px; }
.sizegrip { position: absolute; right: 0; bottom: 0; width: 12px; height: 12px; background: radial-gradient(circle, #999 0 1px, transparent 1px) 0 0 / 4px 4px; clip-path: polygon(100% 0, 100% 100%, 0 100%); }

.tooltip {
  position: absolute;
  left: 389px;
  top: 135px;
  padding: 2px 3px;
  border: 1px solid #e4e4d0;
  background: #ffffe1;
  box-shadow: 3px 3px 2px #777;
  white-space: nowrap;
}
.tooltip p { margin: 0 0 7px; }
.tooltip p:last-child { margin: 0; }
.tooltip em { font-size: 12px; }
.callout { position: absolute; left: 415px; top: 120px; width: 140px; height: 150px; filter: drop-shadow(2px 2px 2px rgba(0, 0, 0, .35)); }
.pointer { position: absolute; left: 387px; top: 118px; width: 14px; height: 20px; }
.step {
  position: absolute;
  left: 556px;
  top: 249px;
  width: 40px;
  height: 40px;
  border-radius: 50%;
  background: #eb0606;
  color: #fff;
  font: 28px/41px "Liberation Sans", sans-serif;
  text-align: center;
}
```
